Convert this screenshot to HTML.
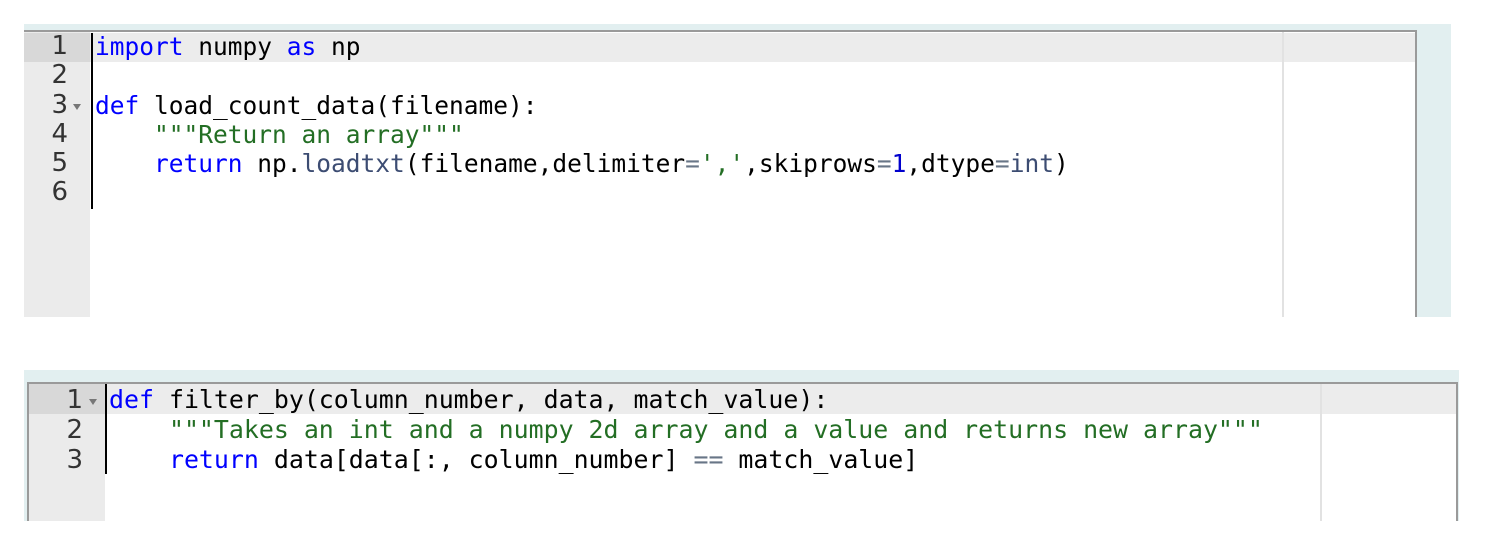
<!DOCTYPE html>
<html><head><meta charset="utf-8"><style>
body{margin:0;width:1499px;height:539px;background:#fff;position:relative;overflow:hidden;font-family:"DejaVu Sans Mono","Liberation Mono",monospace;}
.teal{position:absolute;background:#e2eff0;}
.ed{position:absolute;background:#fff;border-top:2px solid #9a9a9a;border-left:2px solid #9a9a9a;border-right:2px solid #9a9a9a;overflow:hidden;}
.gut{position:absolute;left:0;top:0;bottom:0;background:#ebebeb;}
.act{position:absolute;left:0;right:0;background:#ececec;}
.actg{position:absolute;left:0;background:#d8d8d8;}
.margin{position:absolute;top:0;bottom:0;width:2px;background:#e2e2e2;}
.ln{position:absolute;text-align:right;color:#333;font-family:"DejaVu Sans",sans-serif;}
.code{position:absolute;white-space:pre;color:#000;}
.cur{position:absolute;width:2px;background:#000;}
.fold{position:absolute;width:0;height:0;border-left:4px solid transparent;border-right:4px solid transparent;border-top:6px solid #777;}
.k{color:#0000ff}.s{color:#236e24}.f{color:#3c4c72}.n{color:#0000cd}.o{color:#687687}
</style></head><body>
<div class="teal" style="left:24px;top:24px;width:1427px;height:293px"></div>
<div class="ed" style="left:24px;top:30px;width:1391px;height:285px;border-left:none">
  <div class="act" style="top:1px;height:29px"></div>
  <div class="gut" style="width:66px"></div>
  <div class="actg" style="top:1px;height:29px;width:66px"></div>
  <div class="margin" style="left:1258px"></div>
  <div class="ln" style="left:0;width:44px;top:0;font-size:26px;line-height:29.3px">1<br>2<br>3<br>4<br>5<br>6</div>
  <div class="fold" style="left:49px;top:72px"></div>
  <div class="cur" style="left:67px;top:1px;height:176px"></div>
  <div class="code" style="left:71px;top:0;font-size:24.5px;line-height:29.3px"><span class="k">import</span> numpy <span class="k">as</span> np

<span class="k">def</span> load_count_data(filename):
    <span class="s">"""Return an array"""</span>
    <span class="k">return</span> np.<span class="f">loadtxt</span>(filename,delimiter<span class="o">=</span><span class="s">','</span>,skiprows<span class="o">=</span><span class="n">1</span>,dtype<span class="o">=</span><span class="f">int</span>)
</div>
</div>
<div class="teal" style="left:24px;top:370px;width:1435px;height:151px"></div>
<div class="ed" style="left:27px;top:382px;width:1427px;height:137px">
  <div class="act" style="top:0;height:30px"></div>
  <div class="gut" style="width:76px"></div>
  <div class="actg" style="top:0;height:30px;width:76px"></div>
  <div class="margin" style="left:1291px"></div>
  <div class="ln" style="left:0;width:54px;top:1px;font-size:26px;line-height:30px">1<br>2<br>3</div>
  <div class="fold" style="left:60px;top:15px"></div>
  <div class="cur" style="left:76px;top:0;height:90px"></div>
  <div class="code" style="left:80px;top:1px;font-size:24.9px;line-height:30px"><span class="k">def</span> filter_by(column_number, data, match_value):
    <span class="s">"""Takes an int and a numpy 2d array and a value and returns new array"""</span>
    <span class="k">return</span> data[data[:, column_number] <span class="o">==</span> match_value]</div>
</div>
</body></html>
